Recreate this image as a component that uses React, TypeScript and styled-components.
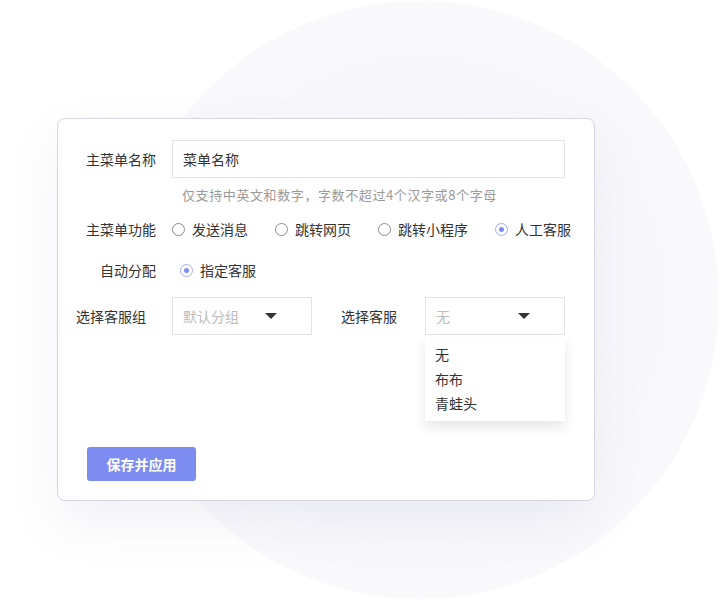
import React from "react";
import styled, { createGlobalStyle } from "styled-components";

const GlobalStyle = createGlobalStyle`
  html, body {
    margin: 0;
    padding: 0;
    background: #ffffff;
  }
  body {
    font-family: "Noto Sans CJK SC", "Noto Sans", sans-serif;
    color: #333333;
  }
`;

const Page = styled.div`
  width: 720px;
  height: 610px;
  box-sizing: border-box;
  padding: 118px 0 0 57px;
  overflow: hidden;
  background: radial-gradient(
    circle 300px at 420px 300px,
    #f5f5fa 0%,
    #f7f7fb 75%,
    #f9f9fc 99.4%,
    #ffffff 100%
  );
`;

const Card = styled.div`
  position: relative;
  width: 538px;
  height: 383px;
  box-sizing: border-box;
  padding: 21px 29px 0 18px;
  background: #ffffff;
  border: 1px solid #d6d6e2;
  border-radius: 8px;
  box-shadow: 0 22px 50px rgba(110, 110, 150, 0.09);
  display: flex;
  flex-direction: column;
`;

const Row = styled.div<{ $top?: number }>`
  display: flex;
  align-items: center;
  gap: 16px;
  margin-top: ${(p) => p.$top ?? 0}px;
  white-space: nowrap;
`;

const Label = styled.span<{ $align?: "left" | "right" }>`
  flex: none;
  width: 80px;
  font-size: 14px;
  line-height: 20px;
  color: #333333;
  text-align: ${(p) => p.$align ?? "right"};
`;

const Input = styled.div`
  width: 393px;
  height: 38px;
  box-sizing: border-box;
  border: 1px solid #e4e4e8;
  padding: 0 10px;
  display: flex;
  align-items: center;
  font-size: 14px;
  color: #333333;
`;

const Hint = styled.div`
  margin: 8px 0 0 106px;
  font-size: 13px;
  line-height: 18px;
  letter-spacing: 0.6px;
  color: #9a9a9a;
  white-space: nowrap;
`;

const RadioGroup = styled.div<{ $indent?: number }>`
  flex: none;
  display: flex;
  align-items: center;
  gap: 27px;
  padding-left: ${(p) => p.$indent ?? 0}px;
`;

const RadioItem = styled.label`
  flex: none;
  display: flex;
  align-items: center;
  gap: 7px;
  font-size: 14px;
  line-height: 20px;
  color: #333333;
`;

const RadioDot = styled.span<{ $checked?: boolean }>`
  flex: none;
  width: 13px;
  height: 13px;
  box-sizing: border-box;
  border-radius: 50%;
  border: 1px solid ${(p) => (p.$checked ? "#a3abeb" : "#8c8c8c")};
  display: flex;
  align-items: center;
  justify-content: center;

  &::after {
    content: "";
    width: 5px;
    height: 5px;
    border-radius: 50%;
    background: #7c8cf0;
    display: ${(p) => (p.$checked ? "block" : "none")};
  }
`;

const SelectWrap = styled.div`
  position: relative;
  flex: none;
`;

const Select = styled.div`
  flex: none;
  width: 140px;
  height: 38px;
  box-sizing: border-box;
  border: 1px solid #e4e4e8;
  padding: 0 34px 0 10px;
  display: flex;
  align-items: center;
  justify-content: space-between;
  font-size: 14px;
  color: #bcbcbc;
`;

const Caret = styled.span`
  width: 0;
  height: 0;
  border-left: 6px solid transparent;
  border-right: 6px solid transparent;
  border-top: 6px solid #333333;
`;

const InlineLabel = styled.span`
  flex: none;
  margin-left: 13px;
  margin-right: 12px;
  font-size: 14px;
  line-height: 20px;
  color: #333333;
`;

const Menu = styled.ul`
  position: absolute;
  top: 40px;
  left: 0;
  width: 140px;
  margin: 0;
  padding: 5px 0;
  box-sizing: border-box;
  list-style: none;
  background: #ffffff;
  box-shadow: 0 6px 12px rgba(0, 0, 0, 0.1);
  z-index: 2;
`;

const MenuItem = styled.li`
  padding: 0 10px;
  font-size: 14px;
  line-height: 24.5px;
  color: #333333;
`;

const Button = styled.button`
  margin: 112px 0 0 11px;
  width: 109px;
  height: 34px;
  border: none;
  border-radius: 3px;
  background: #7c8cf0;
  color: #ffffff;
  font-family: inherit;
  font-size: 14px;
  font-weight: 600;
  cursor: pointer;
`;

const functions = [
  { name: "发送消息", checked: false },
  { name: "跳转网页", checked: false },
  { name: "跳转小程序", checked: false },
  { name: "人工客服", checked: true },
];

const staff = ["无", "布布", "青蛙头"];

const App = () => {
  return (
    <Page>
      <GlobalStyle />
      <Card>
        <Row>
          <Label>主菜单名称</Label>
          <Input>菜单名称</Input>
        </Row>
        <Hint>仅支持中英文和数字，字数不超过4个汉字或8个字母</Hint>
        <Row $top={15}>
          <Label>主菜单功能</Label>
          <RadioGroup>
            {functions.map((f) => (
              <RadioItem key={f.name}>
                <RadioDot $checked={f.checked} />
                {f.name}
              </RadioItem>
            ))}
          </RadioGroup>
        </Row>
        <Row $top={21}>
          <Label>自动分配</Label>
          <RadioGroup $indent={8}>
            <RadioItem>
              <RadioDot $checked />
              指定客服
            </RadioItem>
          </RadioGroup>
        </Row>
        <Row $top={17}>
          <Label $align="left">选择客服组</Label>
          <Select>
            默认分组
            <Caret />
          </Select>
          <InlineLabel>选择客服</InlineLabel>
          <SelectWrap>
            <Select>
              无
              <Caret />
            </Select>
            <Menu>
              {staff.map((s) => (
                <MenuItem key={s}>{s}</MenuItem>
              ))}
            </Menu>
          </SelectWrap>
        </Row>
        <div>
          <Button>保存并应用</Button>
        </div>
      </Card>
    </Page>
  );
};

export default App;
